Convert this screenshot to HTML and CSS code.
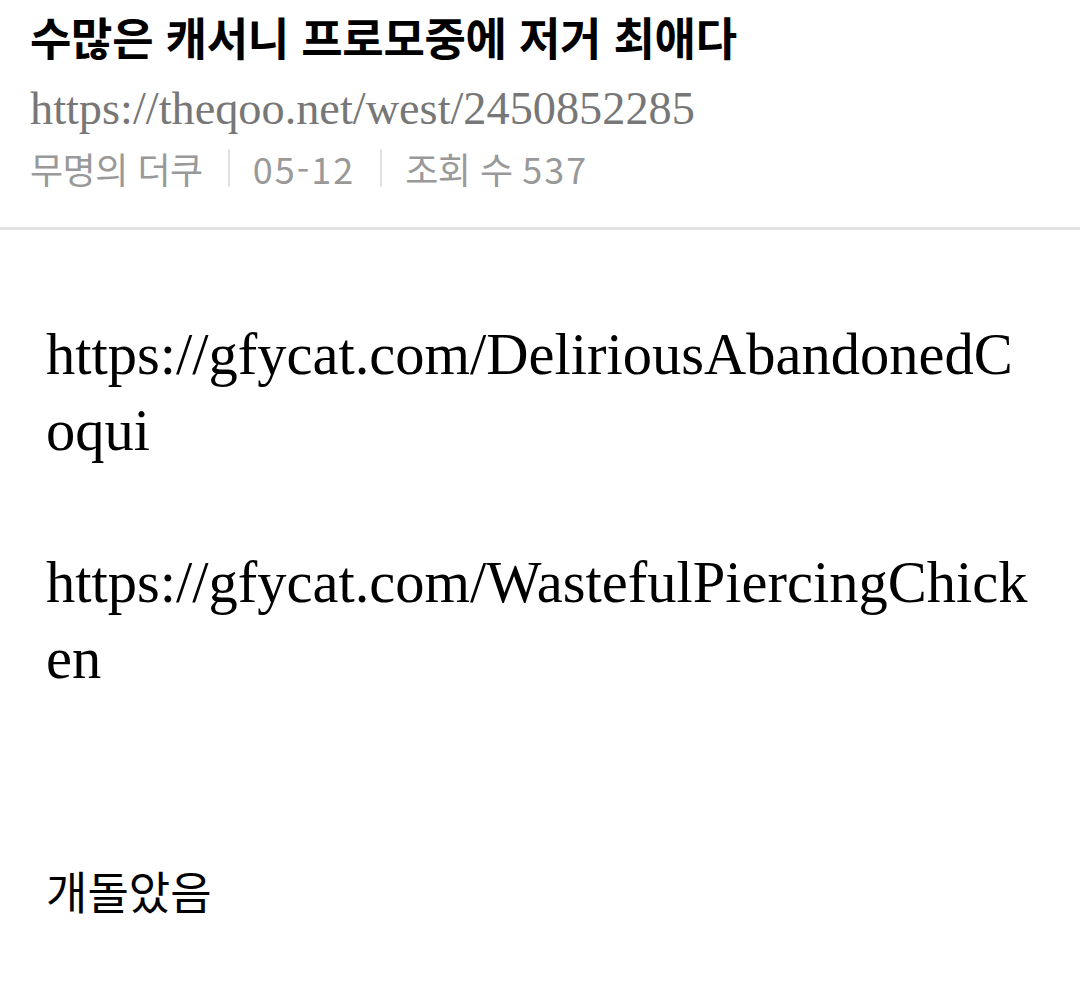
FILE: index.html
```html
<!DOCTYPE html>
<html lang="ko">
<head>
<meta charset="utf-8">
<link rel="stylesheet" href="styles.css">
</head>
<body>
<header class="head">
  <h1 class="title">수많은 캐서니 프로모중에 저거 최애다</h1>
  <div class="src">https://theqoo.net/west/2450852285</div>
  <div class="meta">
    <span>무명의 더쿠</span>
    <span class="sep"></span>
    <span class="num">05-12</span>
    <span class="sep"></span>
    <span>조회 수 <span class="num">537</span></span>
  </div>
</header>
<article class="body">
  <p class="link">https://gfycat.com/DeliriousAbandonedCoqui</p>
  <p class="link">https://gfycat.com/WastefulPiercingChicken</p>
  <p class="text">개돌았음</p>
</article>
</body>
</html>
```
FILE: styles.css
```css
html, body { margin: 0; padding: 0; background: #fff; }
body { width: 1080px; font-family: "Noto Sans CJK KR", "Noto Sans", sans-serif; }
.head { padding: 9px 30px 34px; border-bottom: 3px solid #e2e2e2; }
.title { margin: 0; font-size: 45px; font-weight: 700; line-height: 56px; color: #000; letter-spacing: -0.3px; }
.src { margin-top: 16px; font-family: "Liberation Serif", serif; font-size: 46.3px; line-height: 56px; color: #777; }
.meta { margin-top: 6px; display: flex; align-items: center; font-size: 36px; line-height: 50px; color: #999; letter-spacing: -0.5px; white-space: pre; }
.num { letter-spacing: 2px; }
.sep { width: 2px; height: 38px; background: #e0e0e0; margin: 0 23px 0 25px; }
.body { padding: 87px 46px 0; }
.link { margin: 0 0 76px; font-family: "Liberation Serif", serif; font-size: 58.5px; line-height: 76px; color: #000; word-break: break-all; }
.text { margin: 0; padding-top: 80px; font-size: 45px; line-height: 76px; color: #000; }
```
